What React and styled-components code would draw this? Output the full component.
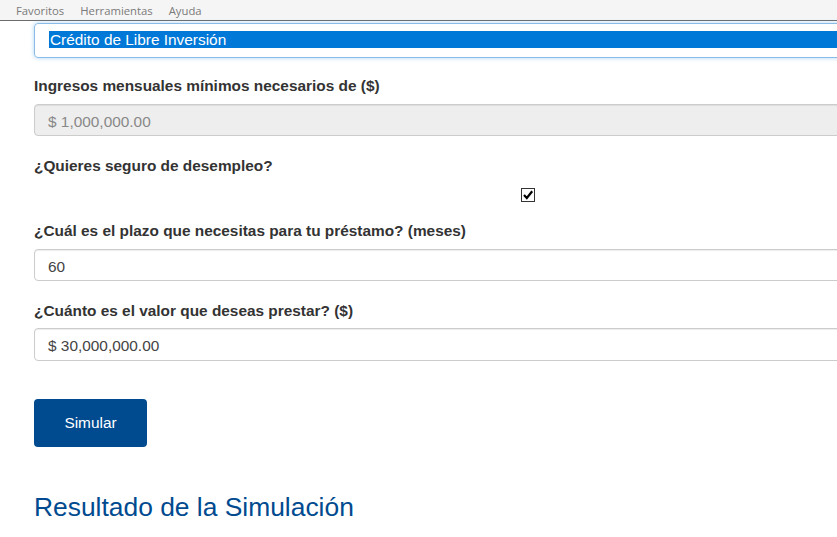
import React from "react";
import styled, { createGlobalStyle } from "styled-components";

const Global = createGlobalStyle`
  html, body { margin: 0; padding: 0; background: #fff; overflow: hidden; }
  body { font-family: "Liberation Sans", Arial, sans-serif; }
`;

const MenuBar = styled.div`
  height: 21px;
  background: #f5f5f5;
  border-bottom: 1px solid #6b6b6b;
  display: flex;
  align-items: center;
  gap: 16px;
  padding-left: 16px;
  font-family: "Open Sans", "Noto Sans", sans-serif;
  font-size: 11.3px;
  color: #7a7a7a;
  box-sizing: border-box;
`;

const Form = styled.div`
  width: 988px;
  margin-left: 34px;
  display: flex;
  flex-direction: column;
`;

const SelectBox = styled.div`
  margin-top: 2px;
  height: 35px;
  box-sizing: border-box;
  border: 1px solid #8cbbe6;
  border-radius: 4px;
  box-shadow: 0 0 4px rgba(102, 175, 233, 0.55);
  display: flex;
  align-items: flex-start;
  padding: 7px 0 0 14px;
`;

const Highlight = styled.div`
  flex: 1;
  height: 17px;
  background: #0078d7;
  color: #fff;
  font-size: 15.4px;
  line-height: 17px;
  padding-left: 1px;
`;

const Label = styled.div`
  font-weight: bold;
  font-size: 15.4px;
  line-height: 20px;
  color: #333;
  margin-top: ${(p) => p.$mt ?? 19.5}px;
  margin-bottom: 7.5px;
`;

const Input = styled.div`
  height: 32.5px;
  box-sizing: border-box;
  border: 1px solid #ccc;
  border-radius: 4px;
  box-shadow: inset 0 1px 1px rgba(0, 0, 0, 0.075);
  background: ${(p) => (p.$disabled ? "#eee" : "#fff")};
  color: ${(p) => (p.$disabled ? "#888" : "#444")};
  font-size: 15.4px;
  display: flex;
  align-items: center;
  padding: 4px 0 0 13px;
`;

const CheckRow = styled.div`
  display: flex;
  justify-content: center;
  margin-top: 4.5px;
  height: 14px;
`;

const Check = styled.div`
  width: 14px;
  height: 14px;
  box-sizing: border-box;
  border: 1px solid #333;
  background: #fff;
  display: flex;
  align-items: center;
  justify-content: center;
`;

const Button = styled.button`
  margin-top: 38.5px;
  width: 113px;
  height: 48px;
  border: none;
  border-radius: 4px;
  background: #004a8f;
  color: #fff;
  font-family: "Liberation Sans", Arial, sans-serif;
  font-size: 15.4px;
  padding: 0;
  cursor: pointer;
`;

const Heading = styled.h2`
  margin: 45px 0 0;
  font-weight: normal;
  font-size: 26.4px;
  line-height: 30px;
  color: #004a8f;
`;

export default function App() {
  return (
    <>
      <Global />
      <MenuBar>
        <span>Favoritos</span>
        <span>Herramientas</span>
        <span>Ayuda</span>
      </MenuBar>
      <Form>
        <SelectBox>
          <Highlight>Crédito de Libre Inversión</Highlight>
        </SelectBox>
        <Label $mt={18}>Ingresos mensuales mínimos necesarios de ($)</Label>
        <Input $disabled>$ 1,000,000.00</Input>
        <Label>¿Quieres seguro de desempleo?</Label>
        <CheckRow>
          <Check>
            <svg width="12" height="12" viewBox="0 0 12 12">
              <path d="M2 6 L4.8 9 L10.2 2.2" fill="none" stroke="#000" strokeWidth="2.2" />
            </svg>
          </Check>
        </CheckRow>
        <Label>¿Cuál es el plazo que necesitas para tu préstamo? (meses)</Label>
        <Input>60</Input>
        <Label>¿Cuánto es el valor que deseas prestar? ($)</Label>
        <Input>$ 30,000,000.00</Input>
        <Button>Simular</Button>
        <Heading>Resultado de la Simulación</Heading>
      </Form>
    </>
  );
}
